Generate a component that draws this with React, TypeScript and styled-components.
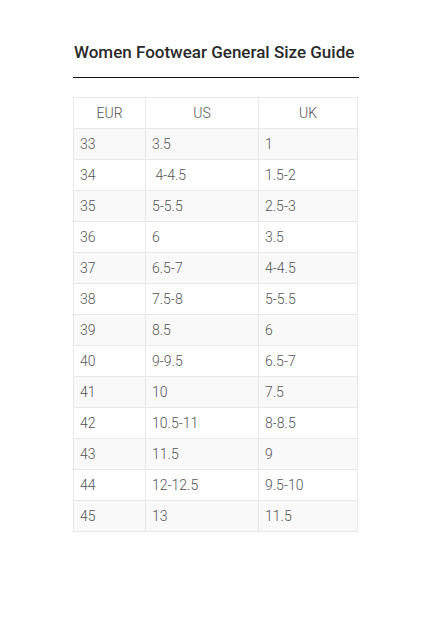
import React from "react";
import styled, { createGlobalStyle } from "styled-components";

const Global = createGlobalStyle`
  html, body { margin: 0; padding: 0; background: #fff; }
  body { font-family: Roboto, "Noto Sans", sans-serif; }
`;

const Page = styled.div`
  width: 430px;
  height: 619px;
  box-sizing: border-box;
  padding: 42px 0 0 73px;
`;

const Title = styled.h2`
  margin: 0;
  width: 285px;
  font-family: Roboto, sans-serif;
  font-weight: 500;
  font-size: 17px;
  line-height: 20px;
  color: #2a2a2a;
  padding-left: 1px;
  padding-bottom: 15px;
  border-bottom: 1px solid #111;
`;

const Table = styled.table`
  margin-top: 19px;
  border-collapse: collapse;
  width: 284px;
  table-layout: fixed;
  font-family: Roboto, sans-serif;
  font-weight: 300;
  font-size: 14px;
  color: #555;
`;

const Cell = styled.td<{ $head?: boolean }>`
  border: 1px solid #e8e8e8;
  height: 30px;
  padding: 0 0 0 6px;
  text-align: ${(p) => (p.$head ? "center" : "left")};
  ${(p) => (p.$head ? "padding: 0;" : "")}
  white-space: pre;
`;

const Row = styled.tr<{ $shade?: boolean }>`
  background: ${(p) => (p.$shade ? "#f9f9f9" : "#fff")};
`;

const rows: [string, string, string][] = [
  ["33", "3.5", "1"],
  ["34", " 4-4.5", "1.5-2"],
  ["35", "5-5.5", "2.5-3"],
  ["36", "6", "3.5"],
  ["37", "6.5-7", "4-4.5"],
  ["38", "7.5-8", "5-5.5"],
  ["39", "8.5", "6"],
  ["40", "9-9.5", "6.5-7"],
  ["41", "10", "7.5"],
  ["42", "10.5-11", "8-8.5"],
  ["43", "11.5", "9"],
  ["44", "12-12.5", "9.5-10"],
  ["45", "13", "11.5"],
];

export default function App() {
  return (
    <Page>
      <Global />
      <Title>Women Footwear General Size Guide</Title>
      <Table>
        <colgroup>
          <col style={{ width: 72 }} />
          <col style={{ width: 113 }} />
          <col style={{ width: 99 }} />
        </colgroup>
        <tbody>
          <Row>
            <Cell $head>EUR</Cell>
            <Cell $head>US</Cell>
            <Cell $head>UK</Cell>
          </Row>
          {rows.map((r, i) => (
            <Row key={r[0]} $shade={i % 2 === 0}>
              <Cell>{r[0]}</Cell>
              <Cell>{r[1]}</Cell>
              <Cell>{r[2]}</Cell>
            </Row>
          ))}
        </tbody>
      </Table>
    </Page>
  );
}
